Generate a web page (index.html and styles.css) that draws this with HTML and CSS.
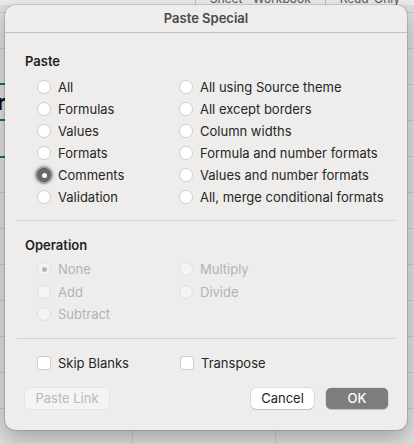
FILE: index.html
```html
<!DOCTYPE html>
<html lang="en">
<head>
  <meta charset="UTF-8">
  <title>Paste Special</title>
  <link rel="stylesheet" href="styles.css">
</head>
<body>
  <div class="backdrop">
    <div class="topbar">
      <span class="cell">Sheet · Workbook</span>
      <span class="cell">Read-Only</span>
    </div>
    <div class="sheet-letter">r</div>
    <div class="sheet-line"></div>

    <div class="dialog">
      <div class="titlebar">Paste Special</div>

      <div class="section">
        <div class="heading">Paste</div>
        <div class="options">
          <label class="opt"><span class="radio"></span>All</label>
          <label class="opt"><span class="radio"></span>All using Source theme</label>
          <label class="opt"><span class="radio"></span>Formulas</label>
          <label class="opt"><span class="radio"></span>All except borders</label>
          <label class="opt"><span class="radio"></span>Values</label>
          <label class="opt"><span class="radio"></span>Column widths</label>
          <label class="opt"><span class="radio"></span>Formats</label>
          <label class="opt"><span class="radio"></span>Formula and number formats</label>
          <label class="opt"><span class="radio checked"></span>Comments</label>
          <label class="opt"><span class="radio"></span>Values and number formats</label>
          <label class="opt"><span class="radio"></span>Validation</label>
          <label class="opt"><span class="radio"></span>All, merge conditional formats</label>
        </div>
      </div>

      <div class="divider"></div>

      <div class="section op">
        <div class="heading">Operation</div>
        <div class="options disabled">
          <label class="opt"><span class="radio on"></span>None</label>
          <label class="opt"><span class="radio"></span>Multiply</label>
          <label class="opt"><span class="radio"></span>Add</label>
          <label class="opt"><span class="radio"></span>Divide</label>
          <label class="opt"><span class="radio"></span>Subtract</label>
        </div>
      </div>

      <div class="divider low"></div>

      <div class="checks">
        <label class="opt"><span class="box"></span>Skip Blanks</label>
        <label class="opt"><span class="box"></span>Transpose</label>
      </div>

      <div class="buttons">
        <button class="btn ghost">Paste Link</button>
        <div class="spacer"></div>
        <button class="btn">Cancel</button>
        <button class="btn primary">OK</button>
      </div>
    </div>
  </div>
</body>
</html>
```

FILE: styles.css
```css
body {
  margin: 0;
  font-family: Inter, "Liberation Sans", sans-serif;
  font-size: 13px;
  color: #262626;
}
.backdrop {
  position: relative;
  width: 414px;
  height: 444px;
  overflow: hidden;
  background-color: #dedede;
  background-image:
    linear-gradient(#c9c9c9 1px, transparent 1px),
    linear-gradient(90deg, #c9c9c9 1px, transparent 1px);
  background-size: 100% 36px, 143px 100%;
  background-position: 0 12px, -11px 0;
}
.topbar {
  position: absolute;
  top: -9px;
  left: 0;
  right: 0;
  height: 14px;
  display: flex;
  justify-content: flex-end;
  background: #ececec;
  color: #555;
  font-size: 12px;
}
.topbar .cell {
  padding: 0 14px;
  border-left: 1px solid #c4c4c4;
}
.sheet-letter {
  position: absolute;
  left: -3px;
  top: 83px;
  width: 20px;
  height: 34px;
  line-height: 34px;
  font-size: 22px;
  font-weight: bold;
  color: #111;
  border-top: 2px solid #1e7145;
  border-bottom: 2px solid #1e7145;
}
.sheet-line {
  position: absolute;
  left: 0;
  top: 156px;
  width: 8px;
  height: 2px;
  background: #1e7145;
}
.dialog {
  position: absolute;
  left: 5px;
  top: 5px;
  width: 402px;
  height: 425px;
  box-sizing: border-box;
  background: #eeedeb;
  border-radius: 10px;
  box-shadow: 0 0 0 1px rgba(0,0,0,0.12), 0 8px 22px rgba(0,0,0,0.28);
  display: flex;
  flex-direction: column;
}
.titlebar {
  height: 28px;
  line-height: 27px;
  text-align: center;
  font-weight: 600;
  color: #4a4a4a;
  border-bottom: 1px solid #c2c2c2;
  box-sizing: border-box;
}
.section {
  padding: 0 20px;
}
.heading {
  font-weight: 600;
  color: #1f1f1f;
  margin: 20px 0 7px;
}
.op .heading {
  margin: 16px 0 5px;
}
.options {
  display: grid;
  grid-template-columns: 142px auto;
  padding-left: 12px;
}
.op .opt {
  height: 22.5px;
}
.opt {
  display: flex;
  align-items: center;
  height: 22px;
}
.radio {
  width: 14px;
  height: 14px;
  border-radius: 50%;
  background: #fff;
  border: 1px solid #cfcfcf;
  box-sizing: border-box;
  margin-right: 7px;
  flex-shrink: 0;
  display: flex;
  align-items: center;
  justify-content: center;
}
.radio.checked {
  background: #6a6a6a;
  border-color: #5a5a5a;
  box-shadow: 0 0 0 2px rgba(120,120,120,0.5), 0 0 3px 3px rgba(140,140,140,0.35);
}
.radio.checked::after,
.radio.on::after {
  content: "";
  width: 5px;
  height: 5px;
  border-radius: 50%;
  background: #fff;
}
.disabled .opt {
  color: #b3b3b3;
}
.disabled .radio {
  background: #f4f4f3;
  border-color: #e0e0e0;
}
.disabled .radio.on::after {
  background: #b5b5b5;
}
.divider {
  height: 1px;
  background: #d2d2d2;
  margin: 12px 12px 0;
}
.divider.low {
  margin-top: 12px;
}
.checks {
  display: grid;
  grid-template-columns: 143px auto;
  padding: 13px 0 0 32px;
}
.box {
  width: 14px;
  height: 14px;
  border-radius: 3px;
  background: #fff;
  border: 1px solid #cdcdcd;
  box-sizing: border-box;
  margin-right: 7px;
}
.buttons {
  display: flex;
  align-items: center;
  padding: 14px 19px 0 20px;
  gap: 12px;
}
.spacer {
  flex: 1;
}
.btn {
  font-family: inherit;
  font-size: 13px;
  height: 21px;
  border-radius: 5px;
  border: none;
  background: #fff;
  color: #262626;
  box-shadow: 0 0 0 0.5px rgba(0,0,0,0.15), 0 1px 1px rgba(0,0,0,0.12);
  padding: 0;
  width: 63px;
}
.btn.ghost {
  width: 84px;
  background: #f4f4f3;
  color: #b9b9b9;
  box-shadow: 0 0 0 0.5px rgba(0,0,0,0.06);
}
.btn.primary {
  width: 62px;
  background: #7d7d7d;
  color: #fff;
  font-weight: 500;
}
```
